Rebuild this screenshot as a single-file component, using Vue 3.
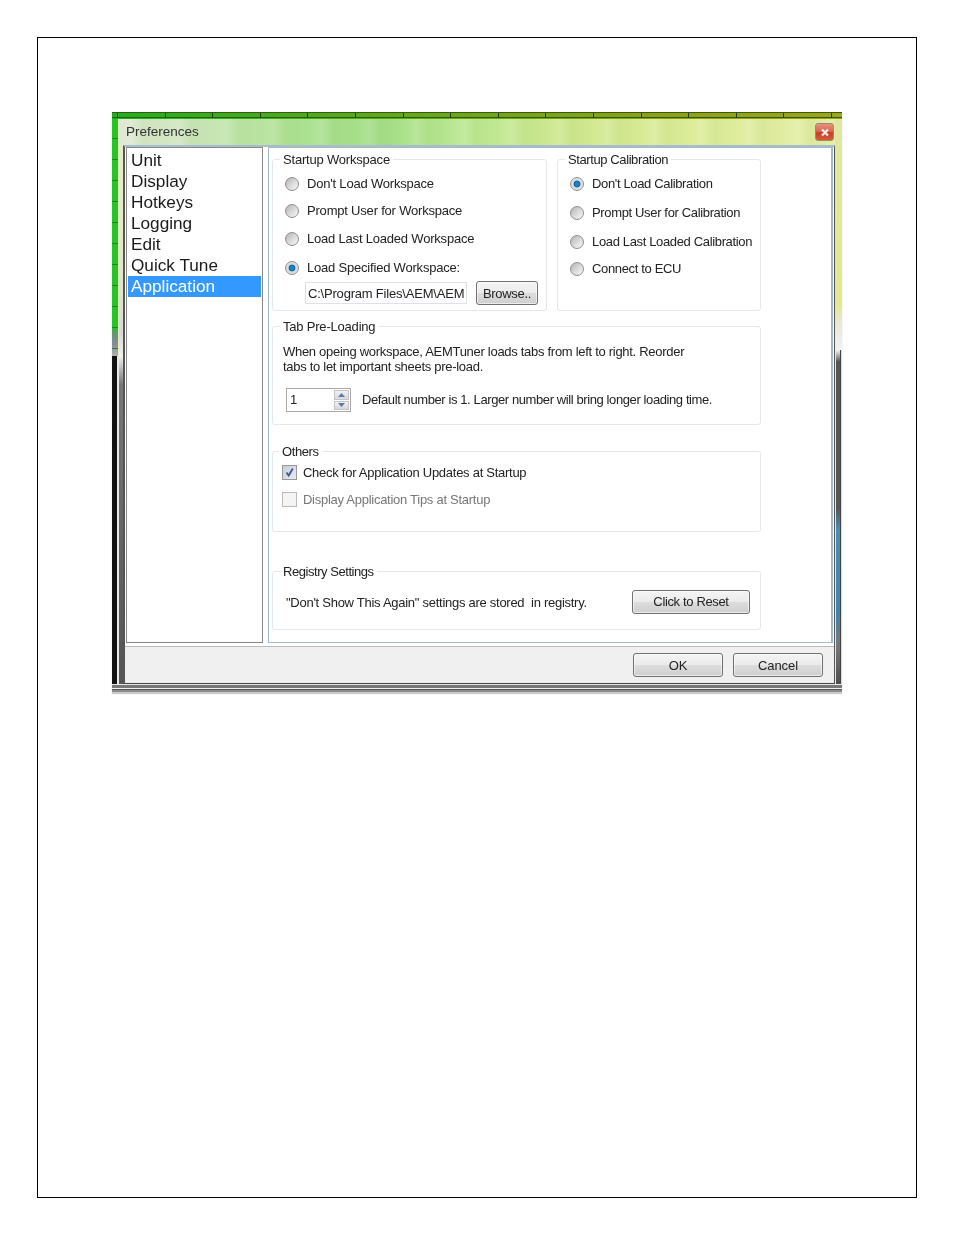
<script setup>
const categories = ['Unit', 'Display', 'Hotkeys', 'Logging', 'Edit', 'Quick Tune', 'Application']
const workspace = [
  { label: "Don't Load Workspace", on: false },
  { label: 'Prompt User for Workspace', on: false },
  { label: 'Load Last Loaded Workspace', on: false },
  { label: 'Load Specified Workspace:', on: true },
]
const calibration = [
  { label: "Don't Load Calibration", on: true },
  { label: 'Prompt User for Calibration', on: false },
  { label: 'Load Last Loaded Calibration', on: false },
  { label: 'Connect to ECU', on: false },
]
</script>

<template>
  <div class="page">
    <div class="frame">
      <div class="window">
        <div class="pane">
          <div class="title">
            <span>Preferences</span>
            <div class="close"><svg width="10" height="9" viewBox="0 0 10 9"><path d="M2 1.5l6 6M8 1.5l-6 6" stroke="#eee" stroke-width="2.2" fill="none"/></svg></div>
          </div>
          <div class="client">
            <div class="body">
              <ul class="list">
                <li v-for="c in categories" :key="c" :class="{ sel: c === 'Application' }">{{ c }}</li>
              </ul>
              <div class="panel">
                <div class="top-row">
                  <section class="group workspace">
                    <h4 class="legend">Startup Workspace</h4>
                    <div class="radios ws">
                      <label v-for="r in workspace" :key="r.label" class="radio-row">
                        <i class="radio" :class="{ on: r.on }"></i>{{ r.label }}
                      </label>
                    </div>
                    <div class="path-row">
                      <div class="path">C:\Program Files\AEM\AEM</div>
                      <button class="btn browse">Browse..</button>
                    </div>
                  </section>
                  <section class="group calib">
                    <h4 class="legend">Startup Calibration</h4>
                    <div class="radios cb">
                      <label v-for="r in calibration" :key="r.label" class="radio-row">
                        <i class="radio" :class="{ on: r.on }"></i>{{ r.label }}
                      </label>
                    </div>
                  </section>
                </div>
                <section class="group preload">
                  <h4 class="legend">Tab Pre-Loading</h4>
                  <p class="desc">When opeing workspace, AEMTuner loads tabs from left to right. Reorder<br>tabs to let important sheets pre-load.</p>
                  <div class="spin-row">
                    <div class="spin">
                      <span class="spin-val">1</span>
                      <div class="spin-btns">
                        <b><svg width="7" height="4" viewBox="0 0 7 4"><path d="M3.5 0L7 4H0z" fill="#5a78b4"/></svg></b>
                        <b><svg width="7" height="4" viewBox="0 0 7 4"><path d="M0 0h7L3.5 4z" fill="#5a78b4"/></svg></b>
                      </div>
                    </div>
                    <span class="spin-note">Default number is 1. Larger number will bring longer loading time.</span>
                  </div>
                </section>
                <section class="group others">
                  <h4 class="legend others-legend">Others</h4>
                  <label class="check-row">
                    <i class="check checked"><svg width="11" height="11" viewBox="0 0 11 11"><path d="M2.5 5.5l2.2 3L8.8 1.5" stroke="#3c5a9c" stroke-width="1.8" fill="none"/></svg></i>Check for Application Updates at Startup
                  </label>
                  <label class="check-row disabled"><i class="check"></i>Display Application Tips at Startup</label>
                </section>
                <section class="group registry">
                  <h4 class="legend registry-legend">Registry Settings</h4>
                  <span class="reg-text">"Don't Show This Again" settings are stored&nbsp; in registry.</span>
                  <button class="btn reset">Click to Reset</button>
                </section>
              </div>
            </div>
            <div class="footer">
              <button class="btn foot">OK</button>
              <button class="btn foot">Cancel</button>
            </div>
          </div>
        </div>
      </div>
    </div>
  </div>
</template>

<style>
html, body { margin: 0; background: #fff; }
</style>

<style scoped>
.page {
  width: 954px;
  height: 1235px;
  padding: 37px;
  box-sizing: border-box;
  background: #fff;
  font-family: "Liberation Sans", Arial, sans-serif;
}
.frame {
  width: 880px;
  height: 1161px;
  box-sizing: border-box;
  border: 1px solid #000;
  padding: 74px 0 0 74px;
}
.window {
  width: 730px;
  height: 581px;
  box-sizing: border-box;
  padding: 7px 7px 9px 7px;
  background:
    repeating-linear-gradient(90deg, #2a3a10 0 1px, transparent 1px 47.6px) 5px 1px / 100% 5px no-repeat,
    linear-gradient(180deg, #3a5a10 0 1px, transparent 1px 5px, #2a5a20 5px 6px, transparent 6px) top / 100% 7px no-repeat,
    linear-gradient(90deg, #1fb01f, #64a818 40%, #8ea016 75%, #a0a418) top / 100% 7px no-repeat,
    linear-gradient(180deg, #e8e8e8 0 1px, #777 1px 4px, #eee 4px 5px, #555 5px 6px, #8a8a8a 6px 8px, #c8c8c8 8px) bottom / 100% 9px no-repeat,
    linear-gradient(90deg, transparent 0, rgba(140,190,220,.7) 56%, rgba(170,200,170,.5) 75%, transparent 88%) bottom 5px left 0 / 100% 3px no-repeat,
    repeating-linear-gradient(180deg, #178a17 0 1px, transparent 1px 21px) left 0 top 5px / 6px 240px no-repeat,
    linear-gradient(90deg, #111 0 5.5px, #e8e8e8 5.5px 7px) left bottom 9px / 7px 328px no-repeat,
    linear-gradient(180deg, #26c426 0, #26c426 37%, #5f9a6a 38%, #8a8a9a 40%, #b0b0b0 42%, #333 44%, #111 46%) left / 6px 100% no-repeat,
    linear-gradient(180deg, #e4eebc 0, #e4eebc 100%) left / 7px 100% no-repeat,
    linear-gradient(90deg, #e8e8e8 0 1.5px, transparent 1.5px 5px, #444 5px 6px, #ddd 6px) right bottom 9px / 7px 334px no-repeat,
    linear-gradient(180deg, #dfe8a0 0, #e2e890 33%, #e8e8d0 36%, #f0f2f6 41%, #555 43%, #555 68%, #4a90b0 72%, #3f84ac 86%, #777 92%, #444 100%) right / 7px 100% no-repeat;
  box-shadow: 0 1px 1px rgba(0,0,0,.2);
  filter: blur(.28px);
}
.pane {
  height: 100%;
  display: flex;
  flex-direction: column;
  background: linear-gradient(180deg, #e6efc8 0, #dfe6c8 30%, #d8d8d8 38%, #f0f0f0 42%, #777 47%, #555 100%);
}
.title {
  height: 26px;
  flex: none;
  display: flex;
  align-items: center;
  justify-content: space-between;
  padding: 0 1px 2px 7px;
  box-sizing: border-box;
  font-size: 13.5px;
  color: #333;
  background:
    repeating-linear-gradient(90deg, rgba(255,255,255,0) 0, rgba(255,255,255,.12) 12px, rgba(120,170,60,.08) 24px, rgba(255,255,255,0) 47.6px),
    linear-gradient(90deg, #dfe8d4 0, #cde6bc 10%, #aee294 24%, #a4de88 36%, #bce894 48%, #cfe890 62%, #dcec98 78%, #e4eea8 100%);
}
.close {
  width: 19px;
  height: 18px;
  margin-top: 2px;
  box-sizing: border-box;
  border: 1px solid #9a8a70;
  border-radius: 3px;
  background: linear-gradient(180deg, #e8907c 0, #d86a54 45%, #c83c24 55%, #d85a3c 100%);
  display: flex;
  align-items: center;
  justify-content: center;
}
.client {
  flex: 1;
  min-height: 0;
  margin-left: 4px;
  display: flex;
  flex-direction: column;
  background: #fff;
  border-top: 2px solid #a8bccf;
  border-bottom: 1px solid #444;
  border-left: 2px solid #555;
  border-right: 1px solid #555;
}
.body {
  flex: 1;
  min-height: 0;
  display: flex;
  gap: 5px;
  padding: 0 1px 3px 1px;
}
.list {
  width: 137px;
  box-sizing: border-box;
  margin: 0;
  padding: 2px 1px 0;
  list-style: none;
  border: 1px solid #888;
  font-size: 17.2px;
  line-height: 21px;
  color: #1a1a1a;
}
.list li { padding-left: 3px; }
.list li.sel { background: #3399ff; color: #fff; }
.panel {
  flex: 1;
  min-width: 0;
  box-sizing: border-box;
  border: 1px solid #a4b8cc;
  border-right-width: 2px;
  padding: 11px 0 0 3px;
  font-size: 13px;
  color: #222;
}
.top-row { display: flex; gap: 10px; }
.group {
  position: relative;
  box-sizing: border-box;
  border: 1px solid #e2e8ee;
  border-radius: 3px;
  width: 489px;
}
.legend {
  position: absolute;
  left: 7px;
  top: -8px;
  margin: 0;
  padding: 0 3px;
  background: #fff;
  font-size: 13px;
  letter-spacing: -.2px;
  line-height: 15px;
  font-weight: 400;
  color: #222;
}
.others-legend { left: 6px; letter-spacing: -.4px; }
.registry-legend { letter-spacing: -.45px; }
.workspace { width: 275px; height: 152px; padding: 10px 0 0 12px; }
.calib { width: 204px; height: 152px; padding: 10px 0 0 12px; letter-spacing: -.35px; }
.calib .legend { letter-spacing: -.4px; }
.radios { display: grid; }
.ws { grid-template-rows: 27px 28px 29px 28px; }
.cb { grid-template-rows: 29px 29px 27px 26px; }
.radio-row {
  display: flex;
  align-items: center;
  gap: 8px;
  height: 27px;
  font-size: 13px;
  white-space: nowrap;
}
.ws .radio-row { letter-spacing: -.2px; }
.radio {
  width: 14px;
  height: 14px;
  flex: none;
  box-sizing: border-box;
  border-radius: 50%;
  border: 1px solid #8f8f8f;
  background: linear-gradient(135deg, #b4b4b4 0, #dcdcdc 55%, #f8f8f8 100%);
}
.radio.on {
  background: radial-gradient(closest-side, #2a90c8 0, #0f6aa8 50%, #c8d4dc 62%, #e4e4e4 100%);
}
.path-row {
  display: flex;
  align-items: center;
  gap: 9px;
  margin: -1px 0 0 20px;
}
.path {
  width: 162px;
  height: 22px;
  line-height: 21px;
  box-sizing: border-box;
  padding-left: 2px;
  border: 1px solid #dde2e8;
  font-size: 13px;
  letter-spacing: -.2px;
  white-space: nowrap;
}
.btn {
  box-sizing: border-box;
  border: 1px solid #707070;
  border-radius: 3px;
  background: linear-gradient(180deg, #f4f4f4 0, #ebebeb 48%, #dcdcdc 52%, #cfcfcf 100%);
  box-shadow: inset 0 0 0 1px rgba(255,255,255,.6);
  font-family: inherit;
  font-size: 13px;
  color: #222;
  padding: 0;
  height: 24px;
}
.browse { width: 62px; letter-spacing: -.3px; }
.preload { margin-top: 15px; height: 99px; padding: 17px 0 0 10px; }
.desc { margin: 0; line-height: 15px; font-size: 13px; letter-spacing: -.29px; white-space: nowrap; }
.spin-row {
  display: flex;
  align-items: center;
  gap: 11px;
  margin: 14px 0 0 3px;
  font-size: 13px;
  letter-spacing: -.4px;
  white-space: nowrap;
}
.spin-note { margin-bottom: 2px; }
.spin {
  width: 65px;
  height: 24px;
  box-sizing: border-box;
  border: 1px solid #aaa;
  display: flex;
  justify-content: space-between;
}
.spin-val { padding-left: 3px; line-height: 21px; font-size: 13px; }
.spin-btns { width: 17px; display: flex; flex-direction: column; gap: 1px; padding: 1px; box-sizing: border-box; }
.spin-btns b {
  flex: 1;
  display: flex;
  align-items: center;
  justify-content: center;
  border: 1px solid #c4c4c4;
  background: linear-gradient(180deg, #f2f2f2, #d8d8d8);
}
.others { margin-top: 26px; height: 81px; padding: 12px 0 0 9px; }
.check-row {
  display: flex;
  align-items: center;
  gap: 6px;
  height: 17px;
  margin-bottom: 10px;
  font-size: 13px;
  letter-spacing: -.27px;
  white-space: nowrap;
}
.check {
  width: 15px;
  height: 15px;
  flex: none;
  box-sizing: border-box;
  border: 1px solid #bbb;
  background: #f4f4f4;
  display: flex;
  align-items: center;
  justify-content: center;
}
.check.checked { border-color: #999; background: linear-gradient(135deg, #c8ccd4, #e8ecf4); }
.disabled { color: #777; }
.registry {
  margin-top: 39px;
  height: 59px;
  display: flex;
  align-items: center;
  justify-content: space-between;
  padding: 2px 10px 0 13px;
  font-size: 13px;
  letter-spacing: -.27px;
  white-space: nowrap;
}
.reg-text { margin-top: 2px; }
.reset { width: 118px; letter-spacing: -.35px; }
.footer {
  height: 37px;
  flex: none;
  box-sizing: border-box;
  background: #f0f0f0;
  border-top: 1px solid #bbb;
  display: flex;
  align-items: center;
  justify-content: flex-end;
  gap: 10px;
  padding: 0 11px 0 0;
}
.foot { width: 90px; height: 24px; letter-spacing: -.1px; }
</style>
